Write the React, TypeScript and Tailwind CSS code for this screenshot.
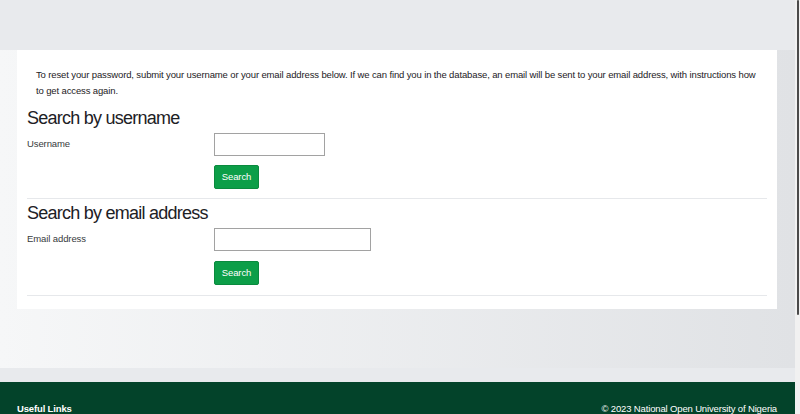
const font = { fontFamily: '"Liberation Sans", Arial, sans-serif' };

const SearchSection = ({
  title,
  label,
  inputWidth,
  gap,
}: {
  title: string;
  label: string;
  inputWidth: string;
  gap: string;
}) => {
  return (
    <div>
      <h3 className="text-[18px] leading-[22px] tracking-[-0.75px] text-[#1d2125]">{title}</h3>
      <div className="mt-[4px] flex">
        <label className="w-[187px] pt-[5px] text-[9.5px] leading-[12px] tracking-[-0.1px] text-[#373a3c]">
          {label}
        </label>
        <div className={`flex flex-col ${gap}`}>
          <input
            type="text"
            className={`${inputWidth} h-[23px] border border-[#a2a2a2] bg-white outline-none`}
          />
          <button className="h-[24px] w-[45px] rounded-[2px] border border-[#0a8a3e] bg-[#0c9e48] text-[9.5px] tracking-[-0.1px] text-white">
            Search
          </button>
        </div>
      </div>
      <hr className={`border-t border-[#e6e8eb] ${gap === "gap-[9px]" ? "mt-[9px]" : "mt-[10px]"}`} />
    </div>
  );
};

export default function App() {
  return (
    <div className="flex h-[414px] w-[800px] overflow-hidden" style={font}>
      <div className="flex flex-1 flex-col bg-gradient-to-r from-[#f6f7f8] to-[#e0e2e5]">
        <div className="h-[50px] shrink-0 bg-[#e8eaed]" />
        <div className="shrink-0 pl-[17px] pr-[18px]">
          <div className="bg-white px-[10px] pt-[17px] pb-[13px]">
            <p className="pl-[9px] text-[9.5px] leading-[16px] tracking-[-0.13px] text-[#1d2125] whitespace-nowrap">
              To reset your password, submit your username or your email address below. If we can find you in the
              database, an email will be sent to your email address, with instructions how
              <br />
              to get access again.
            </p>
            <div className="mt-[8px]">
              <SearchSection title="Search by username" label="Username" inputWidth="w-[111px]" gap="gap-[9px]" />
            </div>
            <div className="mt-[3px]">
              <SearchSection
                title="Search by email address"
                label="Email address"
                inputWidth="w-[157px]"
                gap="gap-[10px]"
              />
            </div>
          </div>
        </div>
        <div className="h-[59px] shrink-0" />
        <div className="h-[14px] shrink-0 bg-[#e8eaed]" />
        <footer className="flex flex-1 shrink-0 justify-between bg-[#03432a] pl-[17px] pr-[18px] pt-[21px] text-[9.5px] leading-[12px] tracking-[-0.15px] text-white">
          <span className="font-bold">Useful Links</span>
          <span>© 2023 National Open University of Nigeria</span>
        </footer>
      </div>
      <div className="flex w-[5px] flex-col bg-[#f1f1f1]">
        <div className="mx-auto h-[315px] w-[2px] rounded-full bg-[#4a4a4a]" />
      </div>
    </div>
  );
}
